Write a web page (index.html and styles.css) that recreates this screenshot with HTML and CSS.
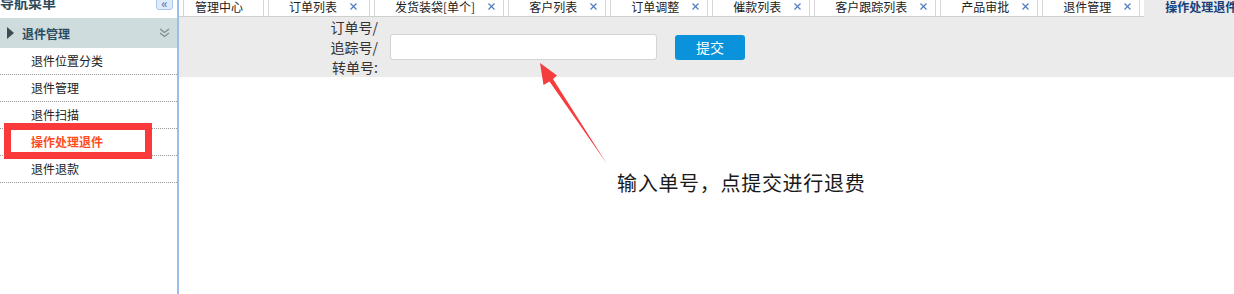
FILE: index.html
```html
<!DOCTYPE html>
<html lang="zh-CN">
<head>
    <meta charset="UTF-8">
    <meta name="viewport" content="width=device-width, initial-scale=1.0">
    <title>操作处理退件</title>
    <link rel="stylesheet" href="styles.css">
</head>
<body>
    <div class="layout">
        <aside class="sidebar">
            <div class="sidebar-title">
                <span>导航菜单</span>
                <span class="collapse-btn">«</span>
            </div>
            <div class="panel-head">
                <span class="caret"></span>
                <span class="panel-name">退件管理</span>
                <svg class="chevrons" width="11" height="10" viewBox="0 0 11 10">
                    <polyline points="1,1 5.5,4.5 10,1" />
                    <polyline points="1,5 5.5,8.5 10,5" />
                </svg>
            </div>
            <ul class="menu">
                <li>退件位置分类</li>
                <li>退件管理</li>
                <li>退件扫描</li>
                <li class="active">操作处理退件</li>
                <li>退件退款</li>
            </ul>
        </aside>

        <main class="main">
            <div class="tabs">
                <div class="tab home">管理中心</div>
                <div class="tab wide">订单列表<svg class="close" width="7" height="7" viewBox="0 0 7 7"><path d="M0.5 0.5L6.5 6.5M6.5 0.5L0.5 6.5"/></svg></div>
                <div class="tab">发货装袋[单个]<svg class="close" width="7" height="7" viewBox="0 0 7 7"><path d="M0.5 0.5L6.5 6.5M6.5 0.5L0.5 6.5"/></svg></div>
                <div class="tab">客户列表<svg class="close" width="7" height="7" viewBox="0 0 7 7"><path d="M0.5 0.5L6.5 6.5M6.5 0.5L0.5 6.5"/></svg></div>
                <div class="tab">订单调整<svg class="close" width="7" height="7" viewBox="0 0 7 7"><path d="M0.5 0.5L6.5 6.5M6.5 0.5L0.5 6.5"/></svg></div>
                <div class="tab">催款列表<svg class="close" width="7" height="7" viewBox="0 0 7 7"><path d="M0.5 0.5L6.5 6.5M6.5 0.5L0.5 6.5"/></svg></div>
                <div class="tab">客户跟踪列表<svg class="close" width="7" height="7" viewBox="0 0 7 7"><path d="M0.5 0.5L6.5 6.5M6.5 0.5L0.5 6.5"/></svg></div>
                <div class="tab">产品审批<svg class="close" width="7" height="7" viewBox="0 0 7 7"><path d="M0.5 0.5L6.5 6.5M6.5 0.5L0.5 6.5"/></svg></div>
                <div class="tab">退件管理<svg class="close" width="7" height="7" viewBox="0 0 7 7"><path d="M0.5 0.5L6.5 6.5M6.5 0.5L0.5 6.5"/></svg></div>
                <div class="tab current">操作处理退件</div>
            </div>
            <form class="toolbar">
                <label class="field-label" for="orderNo">订单号/<br>追踪号/<br>转单号:</label>
                <input class="field-input" id="orderNo" type="text">
                <button class="btn" type="button">提交</button>
            </form>
        </main>
    </div>

    <!-- annotations drawn over the screenshot -->
    <div class="note-box"></div>
    <svg class="note-arrow" width="1234" height="294" viewBox="0 0 1234 294">
        <polygon points="540,63 557,75.5 553,79 607,164 549.5,81.5 543.5,85" />
    </svg>
    <div class="note-text">输入单号，点提交进行退费</div>
</body>
</html>
```

FILE: styles.css
```css
body {
    margin: 0;
    height: 294px;
    overflow: hidden;
    font-family: "Noto Sans CJK SC", "Liberation Sans", sans-serif;
    font-size: 12px;
    color: #222;
    background: #fff;
}
.layout {
    display: flex;
    margin-top: -12px;
    height: 306px;
}
.sidebar {
    width: 177px;
    flex: none;
    border-right: 2px solid #9cbfea;
}
.sidebar-title {
    display: flex;
    align-items: flex-start;
    height: 30px;
    line-height: 28px;
    font-size: 14px;
    font-weight: bold;
    color: #2b4a5e;
}
.collapse-btn {
    margin: 5px 4px 0 auto;
    width: 15px;
    height: 15px;
    border: 1px solid #a9c6ea;
    border-radius: 3px;
    background: #dfebf9;
    color: #5a86c4;
    font-size: 12px;
    line-height: 17px;
    text-align: center;
}
.panel-head {
    display: flex;
    align-items: center;
    height: 30px;
    padding-left: 7px;
    background: #cfdcdd;
}
.caret {
    width: 0;
    height: 0;
    border-left: 7px solid #3e4b55;
    border-top: 6px solid transparent;
    border-bottom: 6px solid transparent;
    margin-right: 8px;
}
.panel-name {
    font-weight: bold;
    font-size: 12px;
    color: #2a4b60;
}
.chevrons {
    margin: 0 7px 0 auto;
    fill: none;
    stroke: #7d8a92;
    stroke-width: 1.3;
}
.menu {
    margin: 0;
    padding: 0;
    list-style: none;
}
.menu li {
    height: 26px;
    line-height: 26px;
    padding-left: 31px;
    border-bottom: 1px dotted #999;
}
.menu li.active {
    color: #ff4d1c;
    font-weight: bold;
}
.main {
    flex: 1;
}
.tabs {
    display: flex;
    gap: 4px;
    height: 28px;
    padding-left: 4px;
    background: #fff;
    border-bottom: 1px solid #cfcfcf;
}
.tab {
    display: flex;
    align-items: center;
    height: 28px;
    padding: 8px 8px 0 20px;
    box-sizing: border-box;
    border-left: 1px solid #d6d6d6;
    border-right: 1px solid #d6d6d6;
    color: #222;
    white-space: nowrap;
}
.tab.home {
    padding: 8px 20px 0 11px;
}
.tab.wide {
    padding-right: 12px;
}
.close {
    margin-left: 13px;
    fill: none;
    stroke: #4f7dbf;
    stroke-width: 1.2;
}
.tab.current {
    flex: 1;
    height: 29px;
    border: none;
    padding-left: 21px;
    background: #ebebeb;
    font-weight: bold;
    color: #163f7a;
}
.toolbar {
    display: flex;
    align-items: center;
    height: 60px;
    margin: 0;
    background: #ebebeb;
}
.field-label {
    width: 199px;
    flex: none;
    text-align: right;
    font-size: 14px;
    line-height: 20px;
    color: #333;
}
.field-input {
    width: 267px;
    height: 26px;
    box-sizing: border-box;
    margin-left: 12px;
    border: 1px solid #d4d4d4;
    border-radius: 3px;
    background: #fff;
}
.btn {
    width: 70px;
    height: 25px;
    margin-left: 18px;
    border: none;
    border-radius: 3px;
    background: #0a93da;
    color: #fff;
    font-family: inherit;
    font-size: 14px;
    line-height: 25px;
    padding: 0;
}
.note-box {
    position: absolute;
    left: 4px;
    top: 123px;
    width: 148px;
    height: 36px;
    box-sizing: border-box;
    border: 7px solid #fa3a3a;
}
.note-arrow {
    position: absolute;
    left: 0;
    top: 0;
    pointer-events: none;
    fill: #f63d3d;
}
.note-text {
    position: absolute;
    left: 617px;
    top: 170px;
    font-size: 20px;
    line-height: 26px;
    letter-spacing: 0.7px;
    color: #1a1a1a;
}
```
